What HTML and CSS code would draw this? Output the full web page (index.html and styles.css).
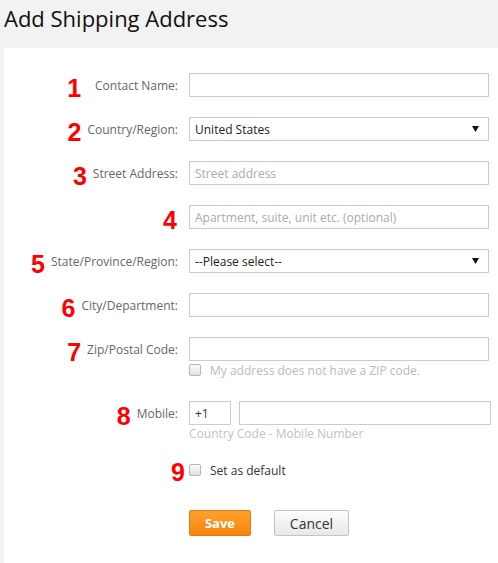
FILE: index.html
```html
<!DOCTYPE html>
<html>
<head>
<meta charset="utf-8">
<link rel="stylesheet" href="styles.css">
</head>
<body>
<h1 class="title">Add Shipping Address</h1>
<div class="panel">
  <div class="row">
    <div class="label"><span class="num num-1">1</span>Contact Name:</div>
    <div class="field"><div class="input"></div></div>
  </div>
  <div class="row">
    <div class="label"><span class="num">2</span>Country/Region:</div>
    <div class="field"><div class="input select"><span class="value">United States</span><svg class="arrow" width="7" height="6" viewBox="0 0 7 6"><path d="M0 0H7L3.5 6Z" fill="#111"/></svg></div></div>
  </div>
  <div class="row">
    <div class="label"><span class="num">3</span>Street Address:</div>
    <div class="field"><div class="input"><span class="ph">Street address</span></div></div>
  </div>
  <div class="row">
    <div class="label"><span class="num num-4">4</span></div>
    <div class="field"><div class="input"><span class="ph">Apartment, suite, unit etc. (optional)</span></div></div>
  </div>
  <div class="row">
    <div class="label"><span class="num">5</span>State/Province/Region:</div>
    <div class="field"><div class="input select"><span class="value">--Please select--</span><svg class="arrow" width="7" height="6" viewBox="0 0 7 6"><path d="M0 0H7L3.5 6Z" fill="#111"/></svg></div></div>
  </div>
  <div class="row">
    <div class="label"><span class="num">6</span>City/Department:</div>
    <div class="field"><div class="input"></div></div>
  </div>
  <div class="row row-zip">
    <div class="label"><span class="num">7</span>Zip/Postal Code:</div>
    <div class="field">
      <div class="input"></div>
      <div class="check-line muted"><span class="box"></span>My address does not have a ZIP code.</div>
    </div>
  </div>
  <div class="row row-mobile">
    <div class="label"><span class="num">8</span>Mobile:</div>
    <div class="field">
      <div class="phone">
        <div class="input code"><span class="value">+1</span></div>
        <div class="input number"></div>
      </div>
      <div class="hint">Country Code - Mobile Number</div>
    </div>
  </div>
  <div class="row row-default">
    <div class="label label-default"><span class="num num-9">9</span></div>
    <div class="field"><div class="check-line dark"><span class="box"></span>Set as default</div></div>
  </div>
  <div class="row row-buttons">
    <div class="label"></div>
    <div class="field buttons">
      <button class="btn btn-save">Save</button>
      <button class="btn btn-cancel">Cancel</button>
    </div>
  </div>
</div>
</body>
</html>
```

FILE: styles.css
```css
html, body {
  margin: 0;
  padding: 0;
  background: #f2f2f2;
  font-family: "Open Sans", "Liberation Sans", sans-serif;
}
.title {
  margin: 0;
  padding: 3px 0 0 4px;
  height: 45px;
  font-size: 22px;
  font-weight: 400;
  line-height: 30px;
  color: #111;
}
.panel {
  margin-left: 4px;
  background: #fff;
  padding-top: 25px;
  height: 490px;
}
.row {
  display: grid;
  grid-template-columns: 174px 302px;
  column-gap: 11px;
  align-items: start;
  margin-bottom: 20px;
}
.label {
  height: 24px;
  display: flex;
  align-items: center;
  justify-content: flex-end;
  font-size: 12px;
  color: #666;
  white-space: nowrap;
}
.num {
  font-family: "Liberation Sans", sans-serif;
  font-weight: 700;
  font-size: 25px;
  line-height: 24px;
  color: #ff0000;
  margin-right: 6px;
  position: relative;
  top: 3px;
}
.num-1 { margin-right: 14px; }
.num-4 { margin-right: 1px; }
.field {
  display: flex;
  flex-direction: column;
}
.input {
  box-sizing: border-box;
  width: 300px;
  height: 24px;
  border: 1px solid #cccccc;
  background: #fff;
  display: flex;
  align-items: center;
  padding: 0 9px 0 5px;
  font-size: 12px;
  color: #333;
}
.ph { color: #aaa; }
.select { justify-content: space-between; }
.select .value { color: #222; }
.arrow { display: block; }
.row-zip { margin-bottom: 22px; }
.check-line {
  display: flex;
  align-items: center;
  font-size: 12px;
  height: 18px;
}
.check-line.muted { color: #bbb; }
.check-line.dark { color: #333; }
.box {
  box-sizing: border-box;
  width: 12px;
  height: 12px;
  border: 1px solid #b5b5b5;
  border-radius: 2px;
  background: linear-gradient(#fdfdfd, #e0e0e0);
  margin-right: 9px;
}
.phone {
  display: flex;
  gap: 8px;
}
.input.code { width: 42px; }
.input.number { width: 252px; }
.hint {
  font-size: 12px;
  color: #c2c2c2;
  line-height: 18px;
}
.row-mobile { margin-bottom: 18px; }
.row-default .label { height: 18px; }
.num-9 { margin-right: -7px; top: 2px; }
.row-default { margin-bottom: 31px; }
.buttons {
  flex-direction: row;
  gap: 23px;
}
.btn {
  box-sizing: border-box;
  height: 26px;
  padding: 0;
  font-family: "Open Sans", "Liberation Sans", sans-serif;
  cursor: pointer;
}
.btn-save {
  width: 62px;
  border: 1px solid #e47a0a;
  background: linear-gradient(#ffa12e, #f6840f);
  color: #fff;
  font-weight: 700;
  font-size: 13px;
  border-radius: 2px;
}
.btn-cancel {
  width: 75px;
  border: 1px solid #c4c4c4;
  background: linear-gradient(#fdfdfd, #e8e8e8);
  color: #333;
  font-size: 14px;
  border-radius: 2px;
}
```
